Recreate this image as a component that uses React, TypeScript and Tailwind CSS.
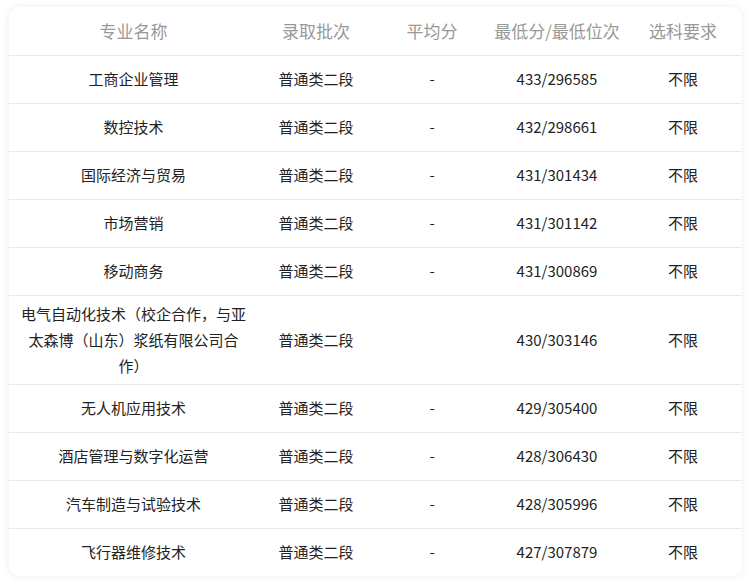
const rows = [
  { name: "工商企业管理", batch: "普通类二段", avg: "-", min: "433/296585", req: "不限" },
  { name: "数控技术", batch: "普通类二段", avg: "-", min: "432/298661", req: "不限" },
  { name: "国际经济与贸易", batch: "普通类二段", avg: "-", min: "431/301434", req: "不限" },
  { name: "市场营销", batch: "普通类二段", avg: "-", min: "431/301142", req: "不限" },
  { name: "移动商务", batch: "普通类二段", avg: "-", min: "431/300869", req: "不限" },
  {
    name: "电气自动化技术（校企合作，与亚太森博（山东）浆纸有限公司合作）",
    batch: "普通类二段",
    avg: "",
    min: "430/303146",
    req: "不限",
  },
  { name: "无人机应用技术", batch: "普通类二段", avg: "-", min: "429/305400", req: "不限" },
  { name: "酒店管理与数字化运营", batch: "普通类二段", avg: "-", min: "428/306430", req: "不限" },
  { name: "汽车制造与试验技术", batch: "普通类二段", avg: "-", min: "428/305996", req: "不限" },
  { name: "飞行器维修技术", batch: "普通类二段", avg: "-", min: "427/307879", req: "不限" },
];

const headers = ["专业名称", "录取批次", "平均分", "最低分/最低位次", "选科要求"];

export default function App() {
  return (
    <div className="w-[752px] h-[587px] bg-white pt-[7px] pl-[9px] font-['Noto_Sans_CJK_SC','Noto_Sans',sans-serif]">
      <div className="w-[733px] rounded-[10px] bg-white shadow-[0_0_8px_rgba(0,0,0,0.08)] overflow-hidden">
        <table className="w-full table-fixed border-collapse text-center">
          <colgroup>
            <col className="w-[249px]" />
            <col className="w-[116px]" />
            <col className="w-[116px]" />
            <col className="w-[134px]" />
            <col className="w-[118px]" />
          </colgroup>
          <thead>
            <tr className="h-[48px] border-b border-[#ebebeb]">
              {headers.map((h) => (
                <th key={h} className="px-0 text-[17px] font-normal text-[#999] whitespace-nowrap">
                  {h}
                </th>
              ))}
            </tr>
          </thead>
          <tbody className="text-[15px] text-[#222] leading-[26px]">
            {rows.map((r, i) => (
              <tr key={i} className={`h-[48px] ${i < rows.length - 1 ? "border-b border-[#ebebeb]" : ""}`}>
                <td className="px-3 py-[5px]">{r.name}</td>
                <td className="px-2">{r.batch}</td>
                <td className="px-2">{r.avg}</td>
                <td className="px-2">{r.min}</td>
                <td className="px-2">{r.req}</td>
              </tr>
            ))}
          </tbody>
        </table>
      </div>
    </div>
  );
}
